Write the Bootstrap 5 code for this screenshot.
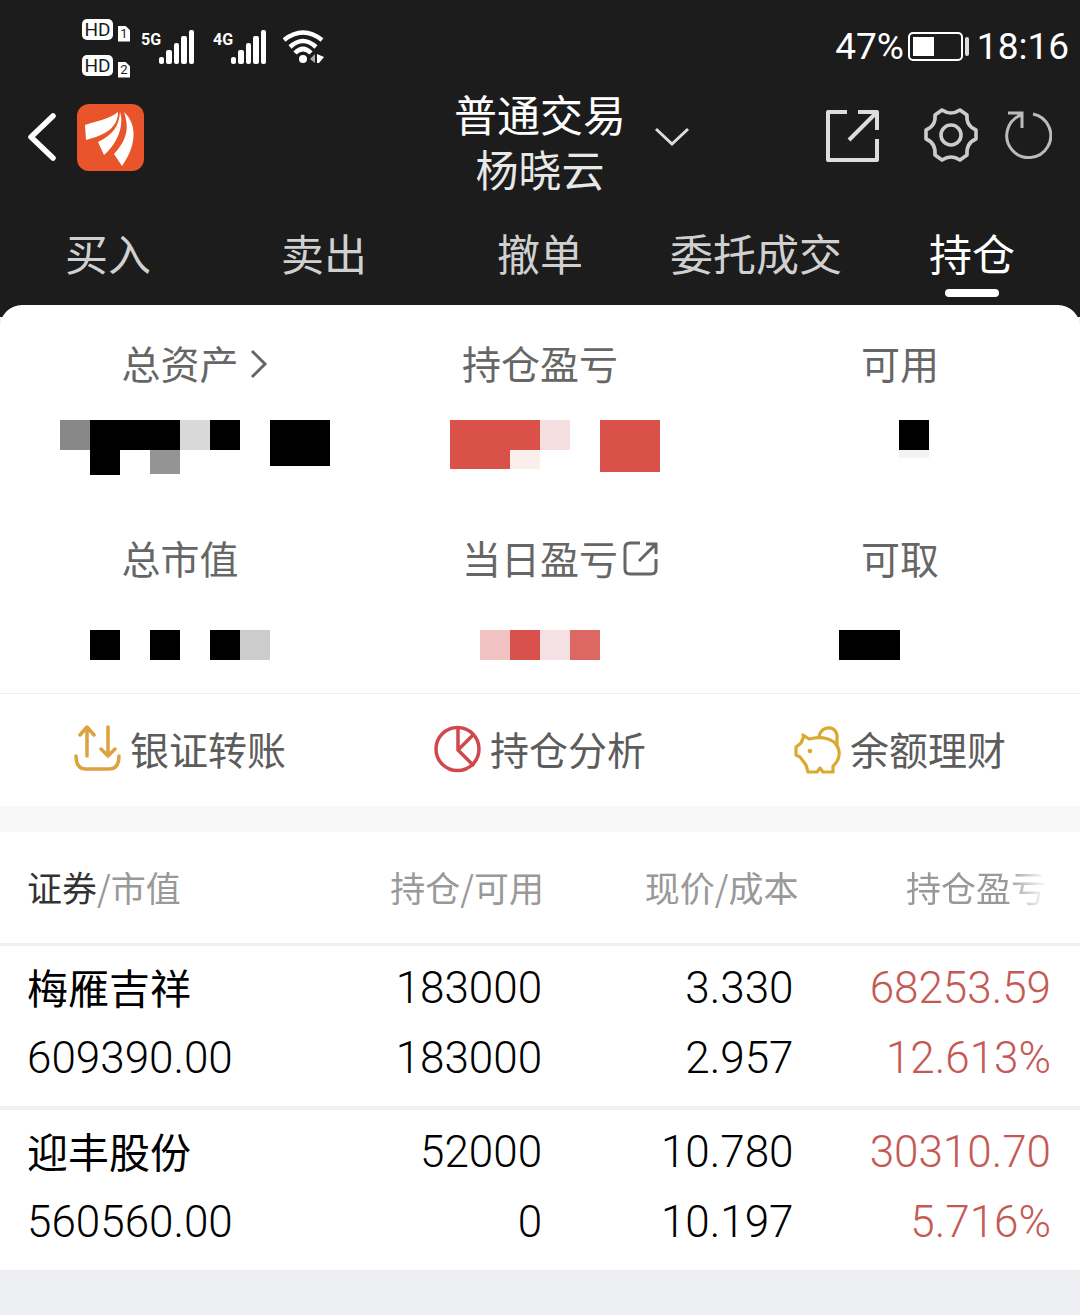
<!DOCTYPE html>
<html lang="zh-CN">
<head>
<meta charset="utf-8">
<meta name="viewport" content="width=device-width, initial-scale=1">
<title>普通交易 - 持仓</title>
<link rel="stylesheet" href="https://cdn.jsdelivr.net/npm/bootstrap@5.3.0/dist/css/bootstrap.min.css">
<style>
  body { background: #eeeff3; color: #000; font-family: "Noto Sans CJK SC", sans-serif; }
  svg { display: block; flex: none; fill: none; }
  .app-top { background: #1c1c1c; color: #fff; padding-bottom: 20px; }
  .plain { background: none; border: 0; padding: 0; color: inherit; }

  /* status bar */
  .status { height: 84px; padding: 10px 11px 0 82px; font-family: Roboto, sans-serif; }
  .hd { width: 31px; height: 21px; border-radius: 5px; background: #fff; color: #1c1c1c; font-size: 19px; line-height: 22px; text-align: center; }
  .sim { width: 12px; height: 16px; margin-bottom: -2px; background: #fff; color: #1c1c1c; font-size: 13px; line-height: 16px; text-align: center; clip-path: polygon(0 0, 60% 0, 100% 30%, 100% 100%, 0 100%); }
  .sim-stack { gap: 15px; margin-right: 11px; }
  .hd-pair { gap: 5px; }
  .net { font-size: 16px; line-height: 18px; font-weight: 700; width: 18px; margin-bottom: 15px; }
  .net-second { margin-left: 18px; }
  .clock { font-size: 37px; line-height: 44px; }

  /* title bar */
  .titlebar { display: grid; grid-template-columns: 1fr auto 1fr; align-items: start; padding: 0 28px; }
  .titlebar .side { height: 106px; }
  .titlebar h1 { font-size: 43px; line-height: 55px; font-weight: 400; margin: 0; padding-top: 2px; }
  .titlebar h1 span { display: block; }
  .owner { color: #e8e8e8; }
  .brand { width: 67px; height: 67px; margin-left: 20px; }
  .tool { margin-bottom: 4px; }
  .gear { margin-left: 44px; margin-right: 25px; }

  /* tabs */
  .trade-tabs { padding-top: 24px; }
  .trade-tabs .nav-link { padding: 0; font-size: 43px; line-height: 64px; color: #d0d0d0; }
  .trade-tabs .nav-link::after { content: ""; display: block; width: 54px; height: 8px; border-radius: 4px; margin: 5px auto 0; }
  .trade-tabs .nav-link.active { color: #fff; }
  .trade-tabs .nav-link.active::after { background: #fff; }

  /* account sheet */
  .sheet { background: #fff; border-radius: 22px 22px 0 0; margin-top: -12px; padding-top: 30px; }
  .lbl { display: grid; grid-template-columns: 1fr auto 1fr; align-items: center; color: #666; font-size: 39px; line-height: 54px; }
  .lbl > :nth-child(1) { grid-column: 2; }
  .lbl svg, .quick svg { margin-top: 4px; }
  .masked { margin: 31px auto 0; }
  .sum-bottom { padding-top: 50px; }
  .sum-bottom .masked { margin: 46px auto 33px; }
  .quick { border-top: 1px solid #eee; }
  .quick a { gap: 9px; padding: 27px 0 31px; color: #5c5c5c; font-size: 39px; line-height: 54px; text-decoration: none; }
  .band { height: 26px; background: #f8f8f8; }

  /* holdings */
  .holdings { background: #fff; padding: 0 27px; }
  .holdings table { width: 100%; table-layout: fixed; }
  .holdings th, .holdings td { width: 24.8%; padding: 7px 0 13px; text-align: right; white-space: nowrap; }
  .holdings th:first-child { width: 25.6%; text-align: left; }
  .holdings td { padding-right: 2px; }
  .holdings td:nth-child(3) { padding-right: 5px; }
  .holdings thead th { padding: 27px 0 28px; color: #999; font-size: 35px; line-height: 56px; font-weight: 400; }
  .holdings b { color: #333; font-weight: 400; }
  .holdings td span, .holdings tbody th span { display: block; font: 300 44px/70px Roboto, sans-serif; }
  .holdings tbody th .stock { padding-bottom: 4px; font: 400 41px/66px "Noto Sans CJK SC", sans-serif; }
  .holdings .gain { color: #c55a55; }
  .fade-end { display: inline-block; padding-right: 7px; -webkit-mask-image: linear-gradient(to right, #000 68%, transparent 96%); mask-image: linear-gradient(to right, #000 68%, transparent 96%); }
  .sep-head { border-top: 3px solid #f0f0f0; }
  .sep { border-top: 4px solid #f0f0f0; }
</style>
<script src="https://cdn.jsdelivr.net/npm/bootstrap@5.3.0/dist/js/bootstrap.bundle.min.js"></script>
</head>
<body>
<header class="app-top">
  <div class="status d-flex justify-content-between align-items-center">
    <div class="d-flex align-items-center">
      <div class="d-flex flex-column sim-stack">
        <div class="d-flex align-items-end hd-pair"><span class="hd">HD</span><span class="sim">1</span></div>
        <div class="d-flex align-items-end hd-pair"><span class="hd">HD</span><span class="sim">2</span></div>
      </div>
      <span class="net">5G</span>
      <svg width="36" height="34" viewBox="0 0 36 34"><g fill="#fff"><rect x="0" y="27" width="5" height="7" rx="2"/><rect x="7" y="20" width="6" height="14" rx="2"/><rect x="15" y="13" width="5" height="21" rx="2"/><rect x="22" y="6" width="6" height="28" rx="2"/><rect x="30" y="0" width="5" height="34" rx="2"/></g></svg>
      <span class="net net-second">4G</span>
      <svg width="36" height="34" viewBox="0 0 36 34"><g fill="#fff"><rect x="0" y="27" width="5" height="7" rx="2"/><rect x="7" y="20" width="6" height="14" rx="2"/><rect x="15" y="13" width="5" height="21" rx="2"/><rect x="22" y="6" width="6" height="28" rx="2"/><rect x="30" y="0" width="5" height="34" rx="2"/></g></svg>
      <svg class="ms-3" width="42" height="34" viewBox="0 0 42 34" stroke="#fff" stroke-width="4.5"><path d="M1 10Q20-5 39 10M7 17Q20 5 33 17M12 23Q20 15 28 23"/><circle cx="20" cy="29" r="4" fill="#fff" stroke="none"/><path d="M32 24v9l-5-4z" fill="#aaa" stroke="none"/><path d="M34 24l7 3-5 6h-2z" fill="#fff" stroke="none"/></svg>
    </div>
    <div class="d-flex align-items-center clock">
      <span>47%</span>
      <svg class="ms-1 me-2" width="61" height="30" viewBox="0 0 61 30"><rect x="1" y="1" width="53" height="27" rx="4" stroke="#fff" stroke-width="2"/><rect x="5" y="5" width="21" height="19" fill="#fff"/><rect x="57" y="5" width="4" height="19" rx="2" fill="#ddd"/></svg>
      <time>18:16</time>
    </div>
  </div>

  <div class="titlebar">
    <div class="side d-flex align-items-center">
      <button class="plain" type="button" aria-label="返回"><svg width="29" height="50" viewBox="0 0 29 50" stroke="#fff" stroke-width="5.5" stroke-linecap="round" stroke-linejoin="round"><path d="M25 4L3 25l22 21"/></svg></button>
      <svg class="brand" viewBox="0 0 67 67"><rect width="67" height="67" rx="12" fill="#e9542a"/><g fill="#fff"><path d="M8 21C20 17 32 15 41 8C41 24 28 31 9 36z"/><path d="M43 8C47 20 42 38 27 51L21 38C36 31 42 22 43 8z"/><path d="M47 8C62 22 58 44 45 62L37 50C51 35 52 23 47 8z"/></g></svg>
    </div>
    <h1 class="text-center"><span>普通交易</span><span class="owner">杨晓云</span></h1>
    <div class="side d-flex align-items-center">
      <button class="plain ms-4 me-auto" type="button" aria-label="切换账户"><svg class="ms-1" width="36" height="20" viewBox="0 0 36 20" stroke="#ddd" stroke-width="3"><path d="M2 2l16 15L34 2"/></svg></button>
      <button class="plain tool" type="button" aria-label="分享"><svg width="53" height="53" viewBox="0 0 53 53" stroke="#ddd" stroke-width="4" stroke-linejoin="round"><path d="M21 3H2v48h49V30M32 3h19v18M51 3L23 31"/></svg></button>
      <button class="plain tool gear" type="button" aria-label="设置"><svg width="56" height="56" viewBox="0 0 56 56" stroke="#ccc" stroke-width="3.6" stroke-linejoin="round"><path d="M19 3q9 6 18 0l7 5q-1 11 9 15v9q-10 4-9 16l-7 5q-9-6-18 0l-7-5q1-12-9-16v-9q10-4 9-15z"/><circle cx="28" cy="28" r="10"/></svg></button>
      <button class="plain tool" type="button" aria-label="刷新"><svg width="48" height="50" viewBox="0 0 48 50" stroke="#bbb" stroke-width="3"><path d="M29 4A22 22 0 1 1 17 5M4 3h14v15"/></svg></button>
    </div>
  </div>

  <nav class="nav row row-cols-5 g-0 trade-tabs text-center">
    <a class="nav-link col" href="#buy">买入</a>
    <a class="nav-link col" href="#sell">卖出</a>
    <a class="nav-link col" href="#cancel">撤单</a>
    <a class="nav-link col" href="#orders">委托成交</a>
    <a class="nav-link col active" aria-current="page" href="#positions">持仓</a>
  </nav>
</header>

<main>
  <section class="sheet position-relative">
    <div class="row row-cols-3 g-0">
      <div class="col"><div class="lbl"><span>总资产</span><svg class="ms-2" width="24" height="30" viewBox="0 0 24 30" stroke="#666" stroke-width="3"><path d="M5 2l13 13L5 28"/></svg></div>
        <svg class="masked" width="360" height="60" viewBox="0 0 360 60"><path fill="#888" d="M60 0h30v30H60z"/><path fill="#000" d="M90 0h90v30h-60v25H90zM210 0h30v30h-30zM270 0h60v46h-60z"/><path fill="#d9d9d9" d="M180 0h30v30h-30z"/><path fill="#949494" d="M150 30h30v24h-30z"/></svg></div>
      <div class="col"><div class="lbl"><span>持仓盈亏</span></div>
        <svg class="masked" width="360" height="60" viewBox="0 0 360 60"><path fill="#d95149" d="M90 0h90v30h-30v19H90zM240 0h60v52h-60z"/><path fill="#f6dfe0" d="M180 0h30v30h-30z"/><path fill="#fbeeeb" d="M150 30h30v19h-30z"/></svg></div>
      <div class="col"><div class="lbl"><span>可用</span></div>
        <svg class="masked" width="360" height="60" viewBox="0 0 360 60"><path fill="#000" d="M179 0h30v30h-30z"/><path fill="#f5f2f2" d="M179 30h30v8h-30z"/></svg></div>
    </div>
    <div class="row row-cols-3 g-0 sum-bottom">
      <div class="col"><div class="lbl"><span>总市值</span></div>
        <svg class="masked" width="360" height="30" viewBox="0 0 360 30"><path fill="#000" d="M90 0h30v30H90zM150 0h30v30h-30zM210 0h30v30h-30z"/><path fill="#ccc" d="M240 0h30v30h-30z"/></svg></div>
      <div class="col"><div class="lbl"><span>当日盈亏</span><svg class="ms-1" width="36" height="36" viewBox="0 0 36 36" stroke="#666" stroke-width="3"><path d="M18 2H8Q3 2 3 7v21q0 5 5 5h21q5 0 5-5V18M24 3h10v10M34 3L17 20"/></svg></div>
        <svg class="masked" width="360" height="30" viewBox="0 0 360 30"><path fill="#f1c3c3" d="M120 0h30v30h-30z"/><path fill="#d9514d" d="M150 0h30v30h-30z"/><path fill="#f5e1e4" d="M180 0h30v30h-30z"/><path fill="#dd6763" d="M210 0h30v30h-30z"/></svg></div>
      <div class="col"><div class="lbl"><span>可取</span></div>
        <svg class="masked" width="360" height="30" viewBox="0 0 360 30"><path fill="#000" d="M119 0h61v30h-61z"/></svg></div>
    </div>
    <div class="quick row row-cols-3 g-0">
      <a class="col d-flex justify-content-center align-items-center" href="#transfer"><svg width="47" height="50" viewBox="0 0 47 50" stroke="#dba23f" stroke-width="3.5" stroke-linecap="round" stroke-linejoin="round"><path d="M2 31q0 13 10 13h23q10 0 10-13M13 31V3M6 10l7-8 7 8M34 2v28M27 24l7 7 7-7"/></svg><span>银证转账</span></a>
      <a class="col d-flex justify-content-center align-items-center" href="#analysis"><svg width="47" height="50" viewBox="0 0 47 50" stroke="#cf484c" stroke-width="3.5"><circle cx="23.5" cy="24" r="21.5"/><path d="M24 3v22l16 16M24 25l15-15"/></svg><span>持仓分析</span></a>
      <a class="col d-flex justify-content-center align-items-center" href="#finance"><svg width="47" height="50" viewBox="0 0 47 50" stroke="#dba930" stroke-width="3.2" stroke-linejoin="round"><path d="M9 10l6 4q15-4 25 3c8 8 6 18-1 24v6H29l-3-4-3 4H14l-2-7-6-8-4-2v-8l5-4 3-7z"/><path d="M25 12c2-13 20-12 18 2v8"/><circle cx="16" cy="26" r="2.3" fill="#dba930" stroke="none"/></svg><span>余额理财</span></a>
    </div>
  </section>
  <div class="band"></div>

  <section class="holdings">
    <table>
      <thead><tr><th scope="col"><b>证券</b>/市值</th><th scope="col">持仓/可用</th><th scope="col">现价/成本</th><th scope="col"><span class="fade-end">持仓盈亏</span></th></tr></thead>
    </table>
  </section>
  <section class="holdings sep-head">
    <table>
      <tbody><tr><th scope="row"><span class="stock">梅雁吉祥</span><span>609390.00</span></th><td><span>183000</span><span>183000</span></td><td><span>3.330</span><span>2.957</span></td><td class="gain"><span>68253.59</span><span>12.613%</span></td></tr></tbody>
    </table>
  </section>
  <section class="holdings sep">
    <table>
      <tbody><tr><th scope="row"><span class="stock">迎丰股份</span><span>560560.00</span></th><td><span>52000</span><span>0</span></td><td><span>10.780</span><span>10.197</span></td><td class="gain"><span>30310.70</span><span>5.716%</span></td></tr></tbody>
    </table>
  </section>
</main>
</body>
</html>
